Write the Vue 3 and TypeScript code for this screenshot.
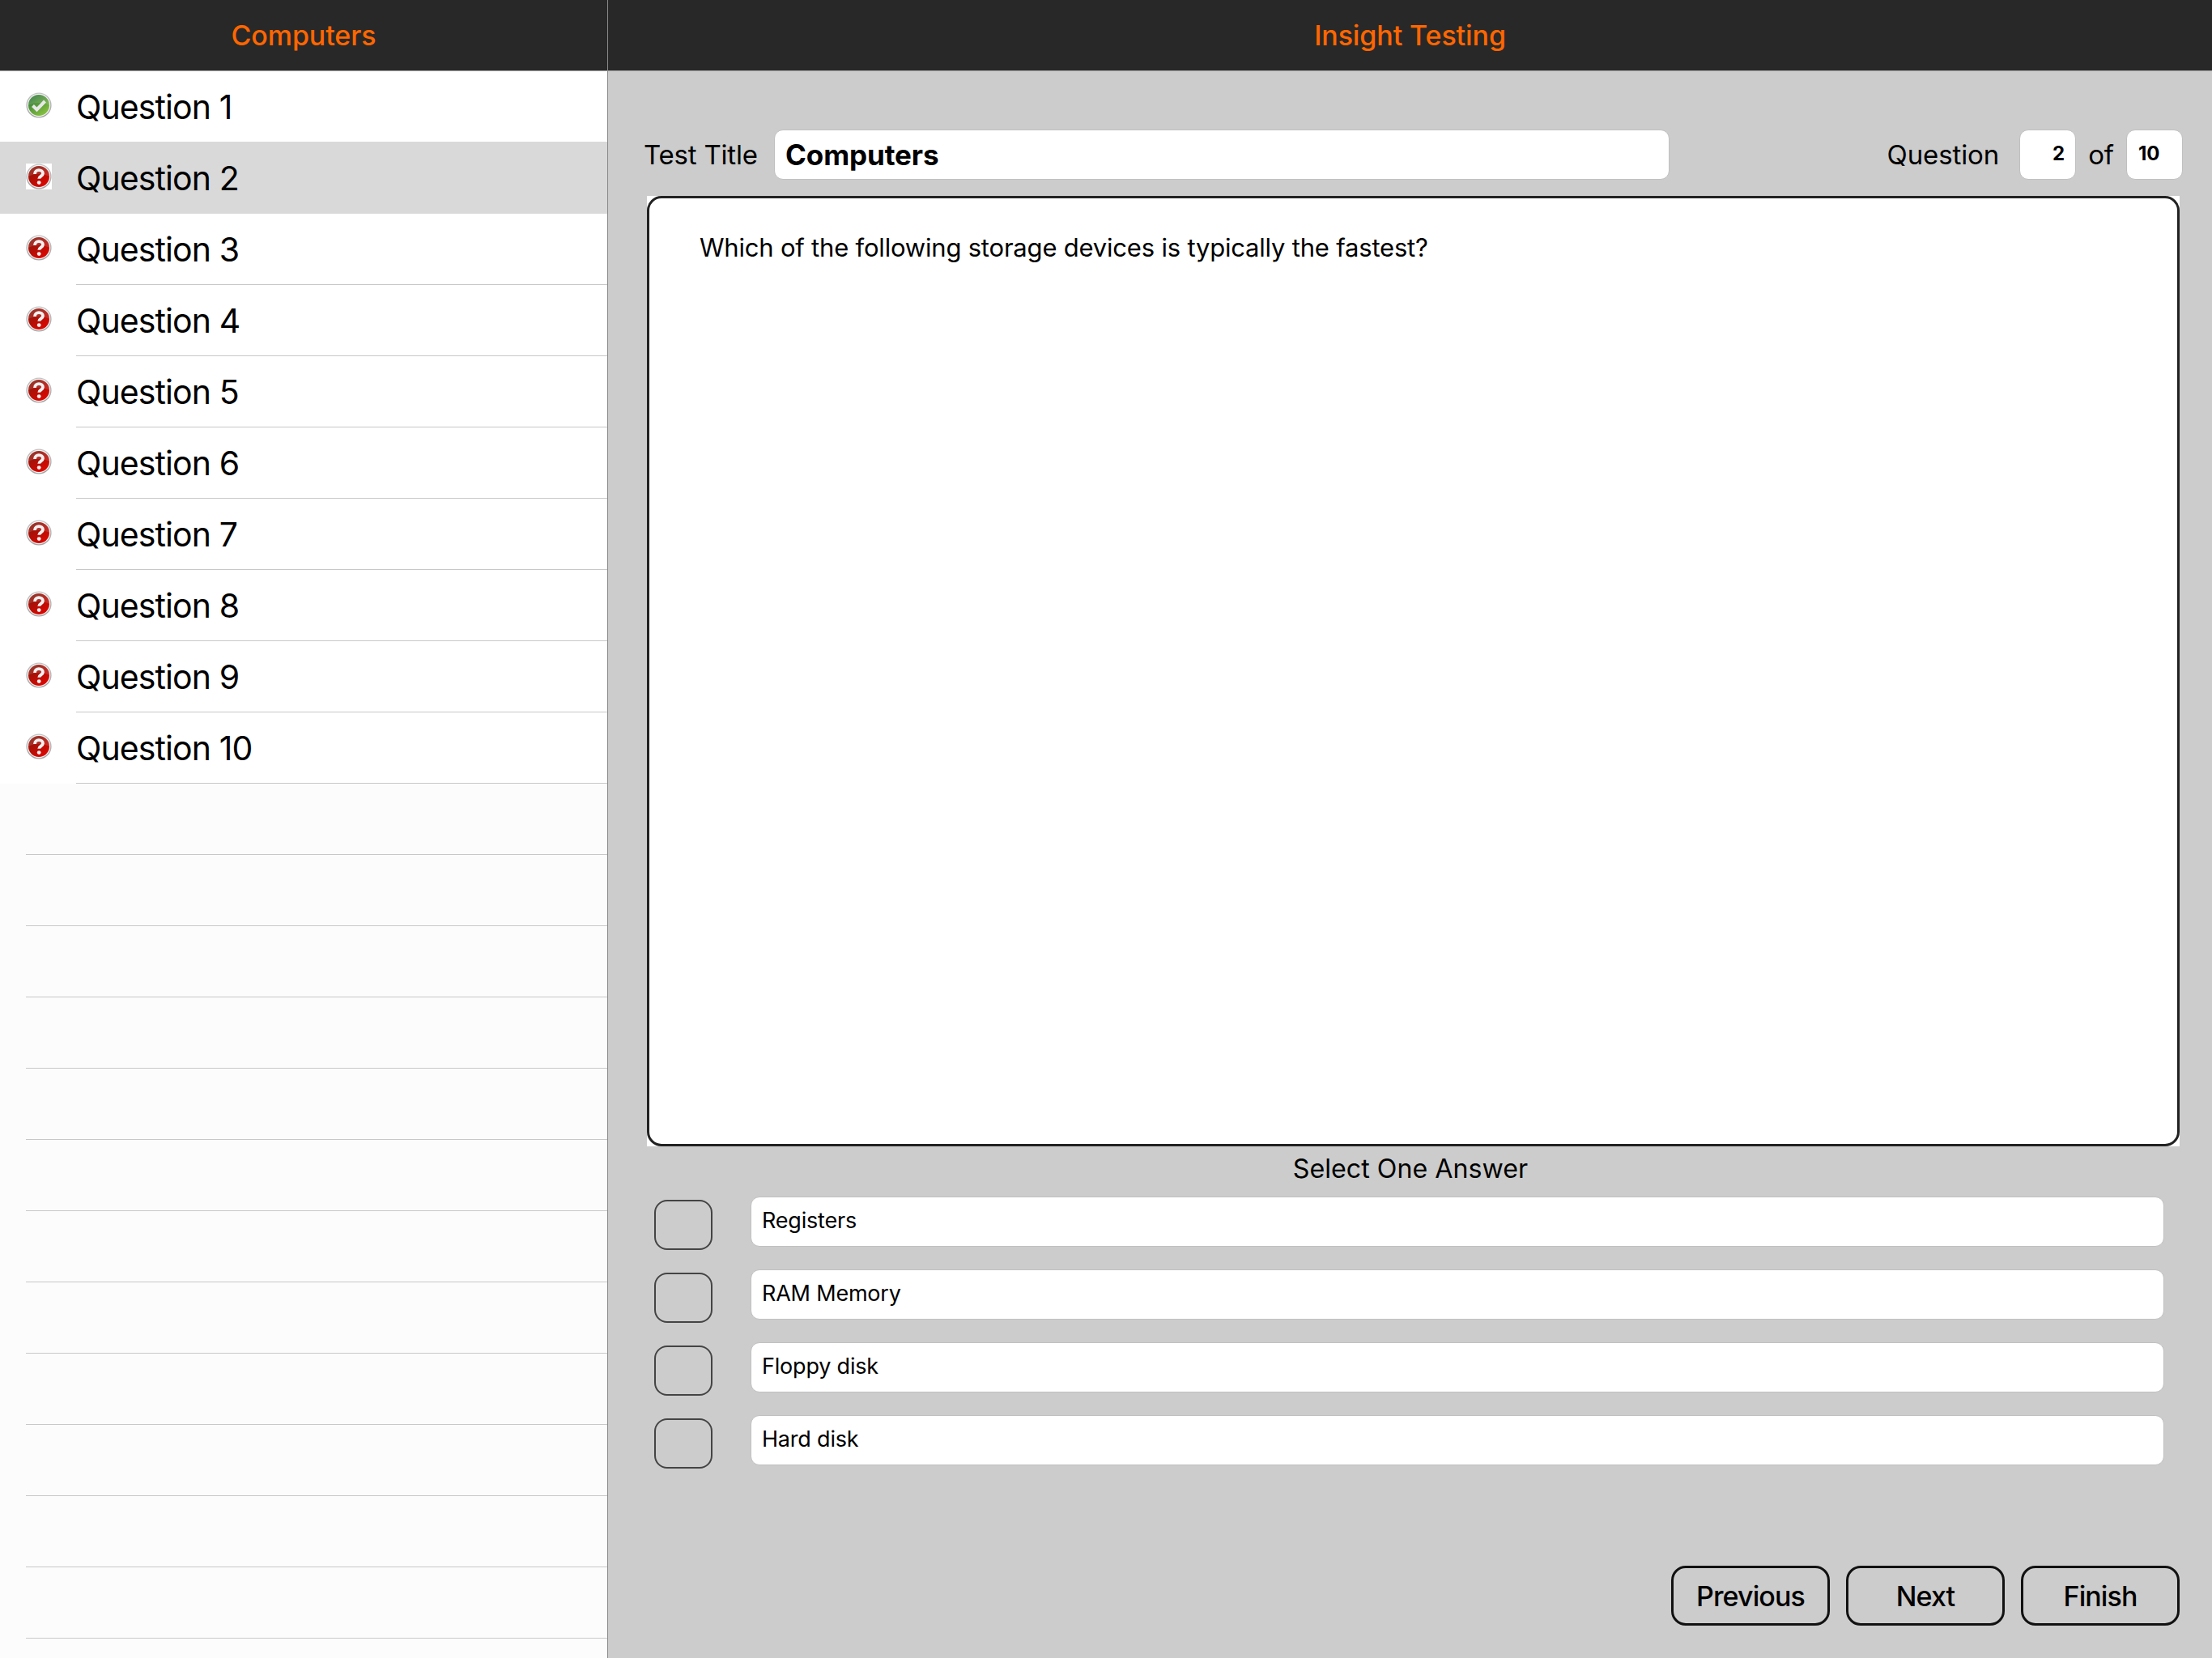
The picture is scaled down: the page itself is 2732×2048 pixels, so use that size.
<script setup lang="ts">
interface Question {
  id: number
  label: string
  answered: boolean
}

const questions: Question[] = Array.from({ length: 10 }, (_, i) => ({
  id: i + 1,
  label: `Question ${i + 1}`,
  answered: i === 0,
}))

const currentId = 2
const answers = ['Registers', 'RAM Memory', 'Floppy disk', 'Hard disk']
const emptyRows = 12
</script>

<template>
  <div class="app">
    <aside class="sidebar">
      <header class="nav">Computers</header>
      <ul class="list">
        <li
          v-for="q in questions"
          :key="q.id"
          class="row"
          :class="{ selected: q.id === currentId }"
        >
          <svg class="status" viewBox="0 0 32 32">
            <defs>
              <linearGradient id="ring" x1="0" y1="0" x2="0" y2="1">
                <stop offset="0" stop-color="#c4c4c4" />
                <stop offset="1" stop-color="#a2a2a2" />
              </linearGradient>
              <linearGradient id="green" x1="0.1" y1="0" x2="0.8" y2="1">
                <stop offset="0" stop-color="#2a7339" />
                <stop offset="1" stop-color="#8cc63f" />
              </linearGradient>
              <linearGradient id="red" x1="0.1" y1="0" x2="0.7" y2="1">
                <stop offset="0" stop-color="#7f1a0e" />
                <stop offset="1" stop-color="#e00600" />
              </linearGradient>
            </defs>
            <rect v-if="q.id === currentId" width="32" height="32" fill="#fff" />
            <circle cx="16" cy="16" r="15.6" fill="url(#ring)" />
            <circle cx="16" cy="16" r="14.2" fill="#f4f4f4" />
            <circle cx="16" cy="16" r="13" :fill="q.answered ? 'url(#green)' : 'url(#red)'" />
            <path d="M3 16a13 13 0 0 1 26 0c-7-4-19-4-26 0z" fill="#fff" opacity="0.12" />
            <path
              v-if="q.answered"
              d="M8.5 16.5l5 5L23.5 11"
              fill="none"
              stroke="#e8e8e8"
              stroke-width="4"
            />
            <template v-else>
              <path
                d="M11 13c0-3 2.2-4.8 5-4.8s5 1.6 5 4c0 3.4-4.8 3.4-4.8 6.6"
                fill="none"
                stroke="#f2f0f0"
                stroke-width="3.8"
              />
              <circle cx="16.2" cy="23.6" r="2.4" fill="#f2f0f0" />
            </template>
          </svg>
          <span class="row-label">{{ q.label }}</span>
        </li>
      </ul>
      <ul class="empty">
        <li v-for="n in emptyRows" :key="n" class="empty-row"></li>
      </ul>
    </aside>

    <main class="main">
      <header class="nav">Insight Testing</header>
      <div class="content">
        <div class="title-row">
          <span class="title-label">Test Title</span>
          <div class="field title-field">Computers</div>
          <div class="counter">
            <span class="count-label">Question</span>
            <div class="field count count-current">2</div>
            <span class="count-of">of</span>
            <div class="field count">10</div>
          </div>
        </div>

        <div class="question-wrap">
          <div class="question">Which of the following storage devices is typically the fastest?</div>
        </div>

        <div class="select-label">Select One Answer</div>

        <div class="answers">
          <div v-for="a in answers" :key="a" class="answer">
            <button class="check" type="button"></button>
            <div class="field answer-field">{{ a }}</div>
          </div>
        </div>

        <div class="actions">
          <button class="action" type="button">Previous</button>
          <button class="action" type="button">Next</button>
          <button class="action" type="button">Finish</button>
        </div>
      </div>
    </main>
  </div>
</template>

<style scoped>
.app {
  display: flex;
  width: 2732px;
  height: 2048px;
  overflow: hidden;
  font-family: Inter, "Liberation Sans", sans-serif;
  color: #000;
}

.sidebar {
  width: 751px;
  flex: none;
  background: #fcfcfc;
  border-right: 1px solid #8a8a8a;
  box-sizing: border-box;
  overflow: hidden;
}

.nav {
  height: 88px;
  box-sizing: border-box;
  display: flex;
  align-items: center;
  justify-content: center;
  background: #282828;
  border-bottom: 1px solid #a8a8a8;
  color: #ff6600;
  font-size: 34px;
  font-weight: 500;
  letter-spacing: -0.1px;
}

.list,
.empty {
  list-style: none;
  margin: 0;
  padding: 0;
}

.list {
  background: #fff;
}

.row {
  height: 88px;
  display: flex;
  align-items: center;
  padding-left: 32px;
  box-sizing: border-box;
}

.row-label {
  height: 100%;
  flex: 1;
  display: flex;
  align-items: center;
  margin-left: 30px;
  font-size: 41px;
  letter-spacing: -0.9px;
  box-sizing: border-box;
  border-bottom: 1px solid #c8c8c8;
}

.row:nth-child(1) .row-label {
  border-bottom: none;
}

.row.selected {
  height: 89px;
  margin-top: -1px;
  background: #d9d9d9;
}

.row.selected .row-label {
  border-bottom: none;
}

.status {
  width: 32px;
  height: 32px;
  flex: none;
  margin-top: -4px;
}

.empty-row {
  height: 88px;
  margin-left: 32px;
  box-sizing: border-box;
  border-bottom: 1px solid #c8c8c8;
}

.main {
  flex: 1;
  min-width: 0;
  display: flex;
  flex-direction: column;
  background: #cccccc;
}

.content {
  flex: 1;
  display: flex;
  flex-direction: column;
  min-height: 0;
  padding: 72px 36px 40px 45px;
}

.field {
  box-sizing: border-box;
  display: flex;
  align-items: center;
  background: #fff;
  border: 1px solid #c0c0c0;
  border-radius: 11px;
}

.title-row {
  display: flex;
  align-items: center;
  height: 62px;
}

.title-label {
  width: 161px;
  flex: none;
  margin-left: -1px;
  font-size: 33px;
  letter-spacing: -0.2px;
}

.title-field {
  width: 1106px;
  height: 62px;
  padding-left: 13px;
  font-size: 35px;
  font-weight: 700;
  letter-spacing: -0.1px;
}

.counter {
  margin-left: auto;
  display: flex;
  align-items: center;
}

.count-label,
.count-of {
  font-size: 33px;
  letter-spacing: -0.1px;
}

.count-label {
  margin-right: 25px;
}

.count-of {
  margin: 0 15px;
}

.count {
  width: 70px;
  height: 62px;
  padding: 0 14px 4px;
  font-size: 24px;
  font-weight: 700;
}

.count-current {
  justify-content: flex-end;
  padding-right: 13px;
}

.question-wrap {
  width: 1893px;
  height: 1174px;
  margin: 20px 0 0 3px;
  background: #fff;
}

.question {
  height: 100%;
  box-sizing: border-box;
  border: 3px solid #222;
  border-radius: 18px;
  padding: 41px 62px;
  font-size: 31px;
  letter-spacing: -0.2px;
  line-height: 40px;
}

.select-label {
  height: 62px;
  box-sizing: border-box;
  display: flex;
  align-items: center;
  justify-content: center;
  font-size: 32.2px;
  padding: 0 8px 8px 0;
}

.answers {
  display: flex;
  flex-direction: column;
  gap: 28px;
}

.answer {
  display: flex;
  align-items: flex-start;
  height: 62px;
  padding-left: 12px;
}

.check {
  width: 72px;
  height: 62px;
  margin-top: 4px;
  box-sizing: border-box;
  background: transparent;
  border: 2px solid #444;
  border-radius: 16px;
  padding: 0;
}

.answer-field {
  width: 1746px;
  height: 62px;
  margin-left: 47px;
  padding: 0 0 3px 13px;
  font-size: 27px;
  letter-spacing: -0.2px;
}

.actions {
  margin-top: auto;
  display: flex;
  justify-content: flex-end;
  gap: 20px;
  padding-right: 4px;
}

.action {
  width: 196px;
  height: 74px;
  box-sizing: border-box;
  background: transparent;
  border: 3px solid #111;
  border-radius: 18px;
  padding: 0;
  font-family: inherit;
  font-size: 34px;
  font-weight: 500;
  letter-spacing: -0.9px;
  color: #000;
}
</style>
